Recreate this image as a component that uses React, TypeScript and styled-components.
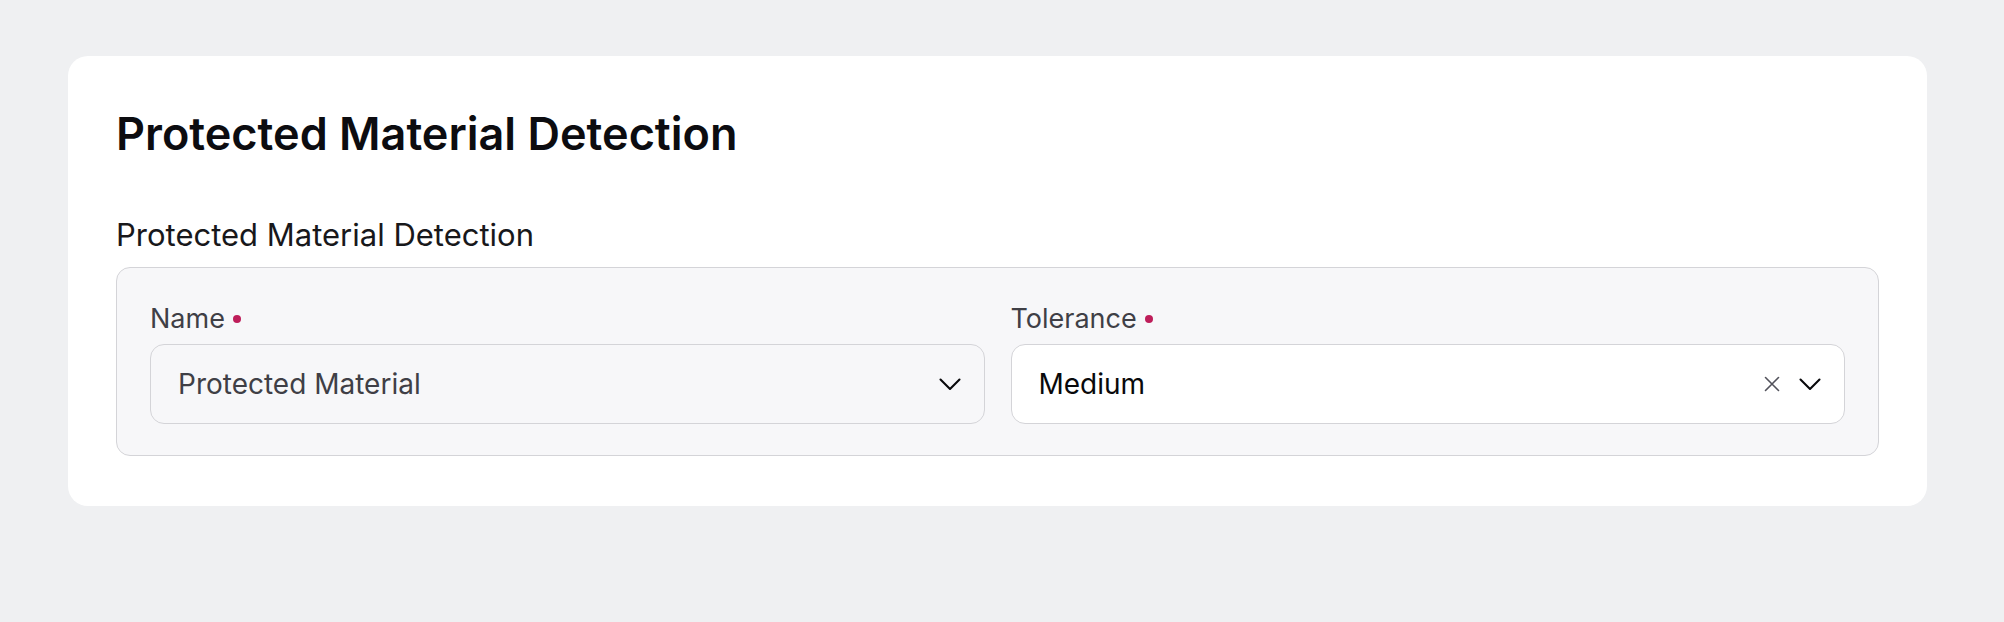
import styled, { createGlobalStyle } from "styled-components";

const GlobalStyle = createGlobalStyle`
  html, body {
    margin: 0;
    padding: 0;
    background: #eff0f2;
    font-family: Inter, "Noto Sans", "Liberation Sans", sans-serif;
  }
`;

const Page = styled.div`
  padding: 56px 77px 116px 68px;
`;

const Card = styled.section`
  background: #ffffff;
  border-radius: 20px;
  padding: 51px 48px 50px 48px;
`;

const Title = styled.h1`
  margin: 0 0 55px 0;
  font-size: 45px;
  line-height: 54px;
  font-weight: 600;
  color: #0c0c10;
`;

const SectionLabel = styled.div`
  font-size: 31px;
  line-height: 38px;
  color: #18181b;
  margin-bottom: 13px;
`;

const FieldGroup = styled.div`
  display: grid;
  grid-template-columns: 1fr 1fr;
  column-gap: 26px;
  background: #f7f7f9;
  border: 1.5px solid #d4d4d8;
  border-radius: 14px;
  padding: 34px 33px 31px 33px;
`;

const Field = styled.div`
  display: flex;
  flex-direction: column;
  gap: 8px;
`;

const Label = styled.label`
  display: flex;
  align-items: center;
  gap: 8px;
  font-size: 27px;
  line-height: 34px;
  color: #3f3f46;
`;

const Required = styled.span`
  width: 8px;
  height: 8px;
  border-radius: 50%;
  background: #be1e5a;
`;

const Select = styled.div<{ $disabled?: boolean }>`
  display: flex;
  align-items: center;
  height: 80px;
  box-sizing: border-box;
  padding: 0 22px 0 27px;
  border: 1.5px solid #d4d4d8;
  border-radius: 14px;
  background: ${(p) => (p.$disabled ? "#f7f7f9" : "#ffffff")};
  color: ${(p) => (p.$disabled ? "#3f3f46" : "#09090b")};
  font-size: 28px;
`;

const Value = styled.span`
  flex: 1;
`;

const Icons = styled.span`
  display: flex;
  align-items: center;
  gap: 17px;
`;

function Chevron() {
  return (
    <svg width="24" height="24" viewBox="0 0 24 24" fill="none" stroke="#09090b" strokeWidth="2.1" strokeLinecap="round" strokeLinejoin="round">
      <path d="M2.5 7.5l9.5 9.5 9.5-9.5" />
    </svg>
  );
}

function Clear() {
  return (
    <svg width="18" height="18" viewBox="0 0 18 18" fill="none" stroke="#52525b" strokeWidth="1.6" strokeLinecap="round">
      <path d="M2.5 2.5l13 13M15.5 2.5l-13 13" />
    </svg>
  );
}

export default function App() {
  return (
    <>
      <GlobalStyle />
      <Page>
        <Card>
          <Title>Protected Material Detection</Title>
          <SectionLabel>Protected Material Detection</SectionLabel>
          <FieldGroup>
            <Field>
              <Label>
                Name <Required />
              </Label>
              <Select $disabled>
                <Value>Protected Material</Value>
                <Icons>
                  <Chevron />
                </Icons>
              </Select>
            </Field>
            <Field>
              <Label>
                Tolerance <Required />
              </Label>
              <Select>
                <Value>Medium</Value>
                <Icons>
                  <Clear />
                  <Chevron />
                </Icons>
              </Select>
            </Field>
          </FieldGroup>
        </Card>
      </Page>
    </>
  );
}
